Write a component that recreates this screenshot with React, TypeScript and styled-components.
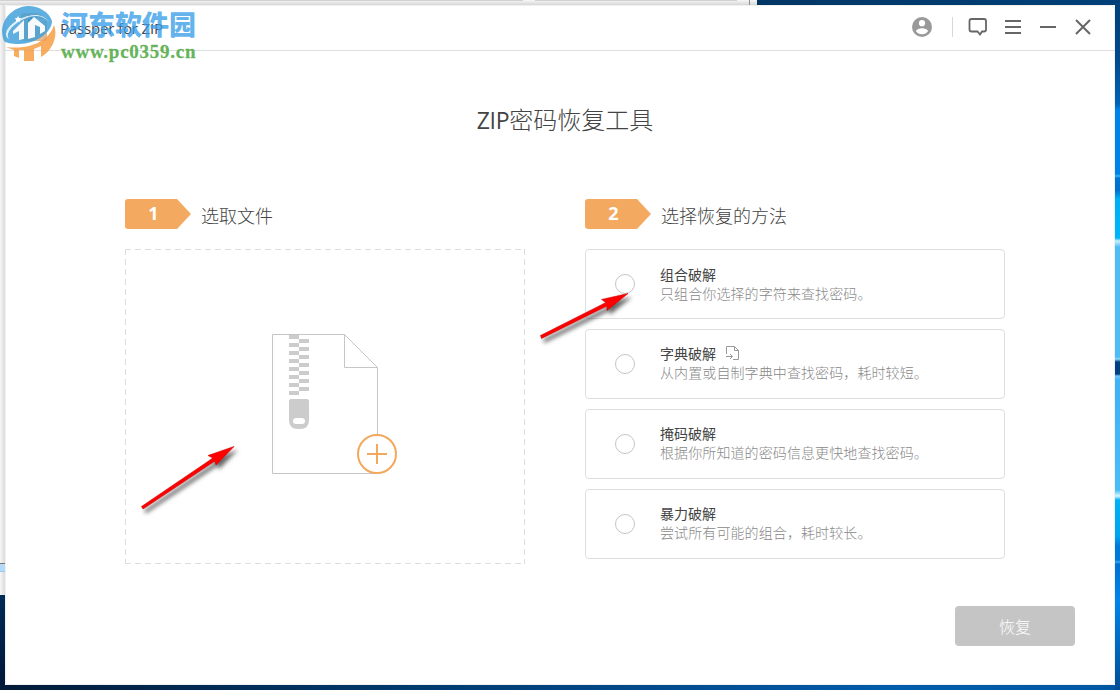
import styled, { createGlobalStyle } from 'styled-components';

// Global styles
const GlobalStyle = createGlobalStyle`
  * {
    box-sizing: border-box;
  }

  body {
    margin: 0;
    overflow: hidden;
    font-family: 'Open Sans', 'Noto Sans CJK SC', sans-serif;
    color: #444;
  }
`;

// Desktop behind the window
const Desktop = styled.div`
  position: relative;
  width: 1120px;
  height: 690px;
  padding: 5px;
  background:
    linear-gradient(#d2d2d2, #d2d2d2) 0 0 / 523px 1px no-repeat,
    linear-gradient(#d2d2d2, #d2d2d2) 535px 0 / 202px 1px no-repeat,
    linear-gradient(#8d8d8d, #8d8d8d) 749px 0 / 1px 5px no-repeat,
    linear-gradient(#f7f7f7, #d6d6d6) 0 0 / 757px 5px no-repeat,
    linear-gradient(
      #004078 0, #004a8c 60px, #0063b4 104px, #0083e6 110px, #0083e6 174px,
      #38b4f4 176px, #0074d2 178px, #0070cc 190px, #00aef4 199px, #00b4f8 238px,
      #c8f2ff 241px, #50bcf4 247px, #50bcf4 357px, #8cd8fa 359px, #003f80 362px,
      #003f80 374px, #70c4f4 376px, #3fb2f4 380px, #4cbcf6 490px, #d4f6ff 496px,
      #00b0f4 500px, #00a4ee 536px, #0078d8 546px, #0078d8 560px, #38a8f0 562px,
      #0070d0 564px, #0084ea 600px, #0060b0 660px, #004c94 690px
    ) 1115px 0 / 5px 690px no-repeat,
    linear-gradient(90deg, #003664, #004078) 757px 0 / 358px 5px no-repeat,
    linear-gradient(#777, #777) 0 563px / 5px 1px no-repeat,
    linear-gradient(#b4daf8 0, #b4daf8 7px, #7cbcec 8px) 0 564px / 5px 8px no-repeat,
    linear-gradient(90deg, #f6f6f6, #dadada) 0 5px / 5px 590px no-repeat,
    linear-gradient(#002b58, #00173a) 0 595px / 5px 90px no-repeat,
    linear-gradient(90deg, #001a38, #003464 30%, #005cac 80%, #0058a4) 0 685px / 1120px 5px no-repeat;
`;

const Window = styled.div`
  display: flex;
  flex-direction: column;
  width: 1110px;
  height: 680px;
  background: #fff;
  border-radius: 3px;
  box-shadow: inset 0 0 0 1px #f0f0f0;
`;

// Title bar
const TitleBar = styled.header`
  display: flex;
  align-items: center;
  height: 46px;
  padding: 0 21px 2px 15px;
  border-bottom: 1px solid #dedede;
`;

const AppIcon = styled.svg`
  width: 30px;
  height: 30px;
`;

const AppName = styled.span`
  margin-left: 10px;
  padding-top: 2px;
  font-size: 15px;
  letter-spacing: -0.15px;
`;

const Controls = styled.div`
  display: flex;
  align-items: center;
  margin-left: auto;
`;

const ControlIcon = styled.svg<{ $gap?: number }>`
  width: 22px;
  height: 22px;
  margin-left: ${({ $gap = 13 }) => $gap}px;
  fill: none;
  stroke: #666;
  stroke-width: 2;
`;

const Separator = styled.div`
  width: 1px;
  height: 20px;
  margin-left: 20px;
  background: #d8d8d8;
`;

// Content
const Content = styled.main`
  display: flex;
  flex-direction: column;
  flex: 1;
  padding: 52px 40px 39px 120px;
`;

const Title = styled.h1`
  margin: 0;
  padding-right: 70px;
  height: 34px;
  font-size: 24px;
  font-weight: 300;
  line-height: 34px;
  text-align: center;
`;

const Latin = styled.span`
  font-weight: 400;
  font-size: 23px;
  letter-spacing: -0.3px;
`;

const Columns = styled.div`
  display: flex;
  gap: 60px;
  margin-top: 62px;
`;

const Column = styled.section<{ $width: number }>`
  width: ${({ $width }) => $width}px;
`;

const StepHeader = styled.div`
  display: flex;
  align-items: center;
  height: 30px;
  margin-bottom: 20px;
`;

const StepBadge = styled.div`
  width: 66px;
  height: 30px;
  padding-right: 9px;
  border-radius: 3px;
  background: #f3aa60;
  clip-path: polygon(0 0, 52px 0, 66px 50%, 52px 100%, 0 100%);
  color: #fff;
  font-size: 18px;
  font-weight: 700;
  line-height: 29px;
  text-align: center;
`;

const StepTitle = styled.h2`
  margin: 3px 0 0 10px;
  font-size: 18px;
  font-weight: 300;
  line-height: 28px;
`;

const DropZone = styled.div`
  display: flex;
  width: 400px;
  height: 315px;
  padding: 84px 0 0 146px;
  background:
    repeating-linear-gradient(90deg, #ddd 0 6px, transparent 6px 10px) 0 0 / 100% 1px no-repeat,
    repeating-linear-gradient(90deg, #ddd 0 6px, transparent 6px 10px) 0 100% / 100% 1px no-repeat,
    repeating-linear-gradient(#ddd 0 6px, transparent 6px 10px) 0 0 / 1px 100% no-repeat,
    repeating-linear-gradient(#ddd 0 6px, transparent 6px 10px) 100% 0 / 1px 100% no-repeat;
`;

const MethodList = styled.div`
  display: flex;
  flex-direction: column;
  gap: 10px;
`;

const MethodText = styled.div`
  margin-left: 25px;
  font-size: 14px;
  line-height: 19px;
`;

const MethodCard = styled.div`
  display: flex;
  align-items: center;
  height: 70px;
  padding-left: 29px;
  border: 1px solid #dedede;
  border-radius: 4px;

  &:not(:first-child) ${MethodText} {
    padding-bottom: 2px;
  }
`;

const Radio = styled.span`
  width: 20px;
  height: 20px;
  border: 1px solid #c4c4c4;
  border-radius: 50%;
`;

const MethodName = styled.div`
  display: flex;
  align-items: center;
  gap: 10px;
  height: 19px;
  color: #444;
`;

const MethodDescription = styled.div`
  height: 19px;
  color: #888;
  font-weight: 300;
  letter-spacing: 0.1px;
`;

const Footer = styled.footer`
  display: flex;
  justify-content: flex-end;
  margin-top: auto;
`;

const RecoverButton = styled.button`
  width: 120px;
  height: 40px;
  padding: 0 0 1px;
  border: 0;
  border-radius: 4px;
  background: #c5c5c5;
  color: #fff;
  font-family: inherit;
  font-size: 16px;
  font-weight: 300;
`;

// Overlays
const Watermark = styled.div`
  position: absolute;
  top: 0;
  left: 0;
  display: flex;
  gap: 4px;
`;

const WatermarkText = styled.div`
  display: flex;
  flex-direction: column;
  padding-top: 7px;
`;

const SiteName = styled.span`
  color: rgba(57, 158, 233, 0.8);
  font-family: 'Noto Sans CJK SC', sans-serif;
  font-size: 27px;
  font-weight: 900;
  line-height: 34px;
`;

const SiteUrl = styled.span`
  color: rgba(76, 168, 62, 0.85);
  font-family: 'Liberation Serif', serif;
  font-size: 19px;
  font-weight: 700;
  line-height: 21px;
  letter-spacing: 0.75px;
  -webkit-text-stroke: 0.3px rgba(76, 168, 62, 0.8);
`;

const Arrows = styled.svg`
  position: absolute;
  top: 0;
  left: 0;
  pointer-events: none;
  filter: drop-shadow(3px 4px 2px rgba(0, 0, 0, 0.6));
`;

const methods = [
  { name: '组合破解', description: '只组合你选择的字符来查找密码。' },
  { name: '字典破解', description: '从内置或自制字典中查找密码，耗时较短。', importable: true },
  { name: '掩码破解', description: '根据你所知道的密码信息更快地查找密码。' },
  { name: '暴力破解', description: '尝试所有可能的组合，耗时较长。' },
];

function ZipFileIcon() {
  const teeth = Array.from({ length: 15 }, (_, i) => i);

  return (
    <svg width="128" height="142" viewBox="0 0 128 142" fill="none">
      <path d="M106.5 101V34.5L73.5 1.5H1.5V140.5H106" stroke="#c6c6c6" />
      <path d="M73.5 1.5V34.5H106" stroke="#c6c6c6" />
      {teeth.map((i) => (
        <rect key={i} x={i % 2 ? 28 : 18} y={2 + i * 4} width="10" height="4" fill="#ccc" />
      ))}
      <path
        d="M20 66H36Q38 66 38 68V87Q38 96 29 96H27Q18 96 18 87V68Q18 66 20 66ZM25 85Q22 85 22 88Q22 91 25 91H31Q34 91 34 88Q34 85 31 85Z"
        fill="#ccc"
        fillRule="evenodd"
      />
      <circle cx="106" cy="121" r="19" fill="#fff" stroke="#f3a85c" strokeWidth="2" />
      <path d="M96 121H116M106 111V131" stroke="#f3a85c" strokeWidth="2" />
    </svg>
  );
}

function ImportIcon() {
  return (
    <svg width="13" height="15" viewBox="0 0 13 15" fill="none" stroke="#999">
      <path d="M.5 8V.5H8.5L12.5 4.5V13.5H7M8.5 .5V4.5H12.5" />
      <path d="M0 10.5H6.5M4 8L6.5 10.5L4 13" />
    </svg>
  );
}

function SiteLogo() {
  return (
    <svg width="57" height="64" viewBox="0 0 57 64">
      {/* blue globe */}
      <path
        d="M4 41C-3 24 10 7 28 6C39 6 49 12 52 21C52 32 36 44 19 44C11 44 6 43 4 41Z"
        fill="#3c9fd9"
        fillOpacity=".82"
      />
      <path d="M22 18C8 24 2 35 9 39C5 33 13 24 24 19C32 15 42 14 49 22C44 14 33 13 22 18Z" fill="#fff" fillOpacity=".8" />
      {/* buildings */}
      <path d="M13 31L24 20V39L19 40V31L13 34ZM28 23L34 17L45 26V31L40 34V27L35 25V37L28 39Z" fill="#fff" fillOpacity=".95" />
      {/* orange swoosh and columns */}
      <path d="M54 25C59 38 50 53 41 57V46L34 49V61H24V50H19V58L14 56V50L6 47C28 50 49 42 54 25Z" fill="#f59a3c" fillOpacity=".82" />
      <path d="M18 16L19 18L21 18L20 20L20 22L18 21L16 22L16 20L15 18L17 18Z" fill="#fff" />
    </svg>
  );
}

export default function App() {
  return (
    <>
      <GlobalStyle />
      <Desktop>
        <Window>
          <TitleBar>
            <AppIcon viewBox="0 0 30 30">
              <path d="M4 1H19L27 8V26Q27 29 24 29H4Q1 29 1 26V4Q1 1 4 1Z" fill="#d9a878" fillOpacity=".8" />
              <path d="M18 1V8H26" stroke="#fff" fill="none" />
              <path d="M8 4H10M10 6H12M8 8H10M10 10H12M8 12H10M10 14H12" stroke="#36566e" strokeWidth="2" />
              <rect x="8" y="16" width="4" height="6" rx="1" fill="#36566e" />
            </AppIcon>
            <AppName>Passper for ZIP</AppName>
            <Controls>
              <svg width="20" height="20" viewBox="0 0 20 20">
                <circle cx="10" cy="10" r="10" fill="#999" />
                <circle cx="10" cy="6.2" r="3.1" fill="#fff" />
                <path d="M4 14.2C4 12.2 8 11.2 10 11.2S16 12.2 16 14.2C14.7 16.1 12.5 17.2 10 17.2S5.3 16.1 4 14.2Z" fill="#fff" />
              </svg>
              <Separator />
              <ControlIcon viewBox="0 0 22 22" $gap={14}>
                <path d="M4.5 3H17Q19 3 19 5V13.5Q19 15.5 17 15.5H15L13 18.5L10.5 15.5H4.5Q2.5 15.5 2.5 13.5V5Q2.5 3 4.5 3Z" strokeWidth="1.8" />
              </ControlIcon>
              <ControlIcon viewBox="0 0 22 22">
                <path d="M3 5H19M3 11H19M3 17H19" />
              </ControlIcon>
              <ControlIcon viewBox="0 0 22 22">
                <path d="M3 11H19" />
              </ControlIcon>
              <ControlIcon viewBox="0 0 22 22">
                <path d="M4 4L18 18M18 4L4 18" />
              </ControlIcon>
            </Controls>
          </TitleBar>

          <Content>
            <Title><Latin>ZIP</Latin>密码恢复工具</Title>
            <Columns>
              <Column $width={400}>
                <StepHeader>
                  <StepBadge>1</StepBadge>
                  <StepTitle>选取文件</StepTitle>
                </StepHeader>
                <DropZone>
                  <ZipFileIcon />
                </DropZone>
              </Column>
              <Column $width={420}>
                <StepHeader>
                  <StepBadge>2</StepBadge>
                  <StepTitle>选择恢复的方法</StepTitle>
                </StepHeader>
                <MethodList>
                  {methods.map((method) => (
                    <MethodCard key={method.name}>
                      <Radio />
                      <MethodText>
                        <MethodName>
                          {method.name}
                          {method.importable && <ImportIcon />}
                        </MethodName>
                        <MethodDescription>{method.description}</MethodDescription>
                      </MethodText>
                    </MethodCard>
                  ))}
                </MethodList>
              </Column>
            </Columns>
            <Footer>
              <RecoverButton>恢复</RecoverButton>
            </Footer>
          </Content>
        </Window>

        <Watermark>
          <SiteLogo />
          <WatermarkText>
            <SiteName>河东软件园</SiteName>
            <SiteUrl>www.pc0359.cn</SiteUrl>
          </WatermarkText>
        </Watermark>

        <Arrows width="1120" height="690" viewBox="0 0 1120 690">
          <g fill="#f00" stroke="#c00" strokeWidth=".6">
            <path d="M141.5 506.5L213 458L208 455.5L234 446.5L216 465L215 461L143 509Z" />
            <path d="M540.5 335.5L606 302.5L601.5 299.5L628 293.5L607 310.5L607 306L541.5 338.5Z" />
          </g>
        </Arrows>
      </Desktop>
    </>
  );
}
